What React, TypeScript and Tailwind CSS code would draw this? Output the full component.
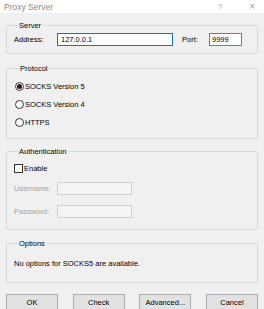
import React from 'react';

const font = { fontFamily: '"Liberation Sans", Arial, sans-serif' };

interface GroupProps {
  title: string;
  className?: string;
  children: React.ReactNode;
}

const Group: React.FC<GroupProps> = ({ title, className, children }) => (
  <fieldset className={`border border-[#d9d9d9] rounded-[2px] ${className ?? ''}`}>
    <legend className="ml-[4px] px-[1px] text-[7.5px] leading-[9px] text-black">{title}</legend>
    {children}
  </fieldset>
);

const Radio: React.FC<{ label: string; checked?: boolean }> = ({ label, checked }) => (
  <div className="flex items-center h-[10px]">
    <span className="w-[9px] h-[9px] rounded-full border border-[#333] bg-white flex items-center justify-center">
      {checked && <span className="w-[5px] h-[5px] rounded-full bg-[#1a1a1a]" />}
    </span>
    <span className="ml-[1px] text-[7.5px] leading-[9px] text-black">{label}</span>
  </div>
);

const Button: React.FC<{ label: string }> = ({ label }) => (
  <button className="w-[52px] h-[16px] bg-[#e1e1e1] border border-[#adadad] text-[7.5px] leading-[9px] text-black flex items-center justify-center">
    {label}
  </button>
);

export default function App() {
  return (
    <div className="w-[264px] h-[309px] bg-[#f0f0f0] overflow-hidden" style={font}>
      {/* title bar */}
      <div className="h-[13px] bg-white flex items-center pl-[4px] pr-[9px]">
        <span className="text-[8.5px] leading-[10px] text-[#8a8a8a]">Proxy Server</span>
        <span className="ml-auto text-[8px] leading-[10px] text-[#9a9a9a]">?</span>
        <span className="ml-[27px] text-[10px] leading-[10px] text-[#9a9a9a]">×</span>
      </div>

      <div className="px-[6px]">
        <Group title="Server" className="mt-[8px] pt-[3px] pb-[7px] px-[7px]">
          <div className="flex items-center text-[7.5px] leading-[9px] text-black">
            <span className="w-[43px]">Address:</span>
            <div className="w-[116px] h-[13px] bg-white border border-[#0078d7] flex items-center pl-[3px]">
              127.0.0.1
            </div>
            <span className="ml-[9px] w-[27px]">Port:</span>
            <div className="w-[33px] h-[13px] bg-white border border-[#7a7a7a] flex items-center pl-[2px]">
              9999
            </div>
          </div>
        </Group>

        <Group title="Protocol" className="mt-[10px] pt-[8px] pb-[11px] px-[8px] flex flex-col gap-[8px]">
          <div className="flex flex-col gap-[8px]">
            <Radio label="SOCKS Version 5" checked />
            <Radio label="SOCKS Version 4" />
            <Radio label="HTTPS" />
          </div>
        </Group>

        <Group title="Authentication" className="mt-[8px] pt-[7px] pb-[11px] px-[7px]">
          <div className="flex items-center h-[10px]">
            <span className="w-[9px] h-[9px] border border-[#333] bg-white" />
            <span className="ml-[1px] text-[7.5px] leading-[9px] text-black">Enable</span>
          </div>
          <div className="mt-[9px] flex flex-col gap-[10px] text-[7.5px] leading-[9px] text-[#a3a3a3]">
            <div className="flex items-center">
              <span className="w-[43px]">Username:</span>
              <div className="w-[75px] h-[13px] bg-[#f4f4f4] border border-[#d0d0d0]" />
            </div>
            <div className="flex items-center">
              <span className="w-[43px]">Password:</span>
              <div className="w-[75px] h-[13px] bg-[#f4f4f4] border border-[#d0d0d0]" />
            </div>
          </div>
        </Group>

        <Group title="Options" className="mt-[9px] pt-[11px] pb-[14px] px-[7px]">
          <p className="text-[7.5px] leading-[9px] text-black">No options for SOCKS5 are available.</p>
        </Group>

        <div className="mt-[11px] flex justify-between">
          <Button label="OK" />
          <Button label="Check" />
          <Button label="Advanced..." />
          <Button label="Cancel" />
        </div>
      </div>
    </div>
  );
}
